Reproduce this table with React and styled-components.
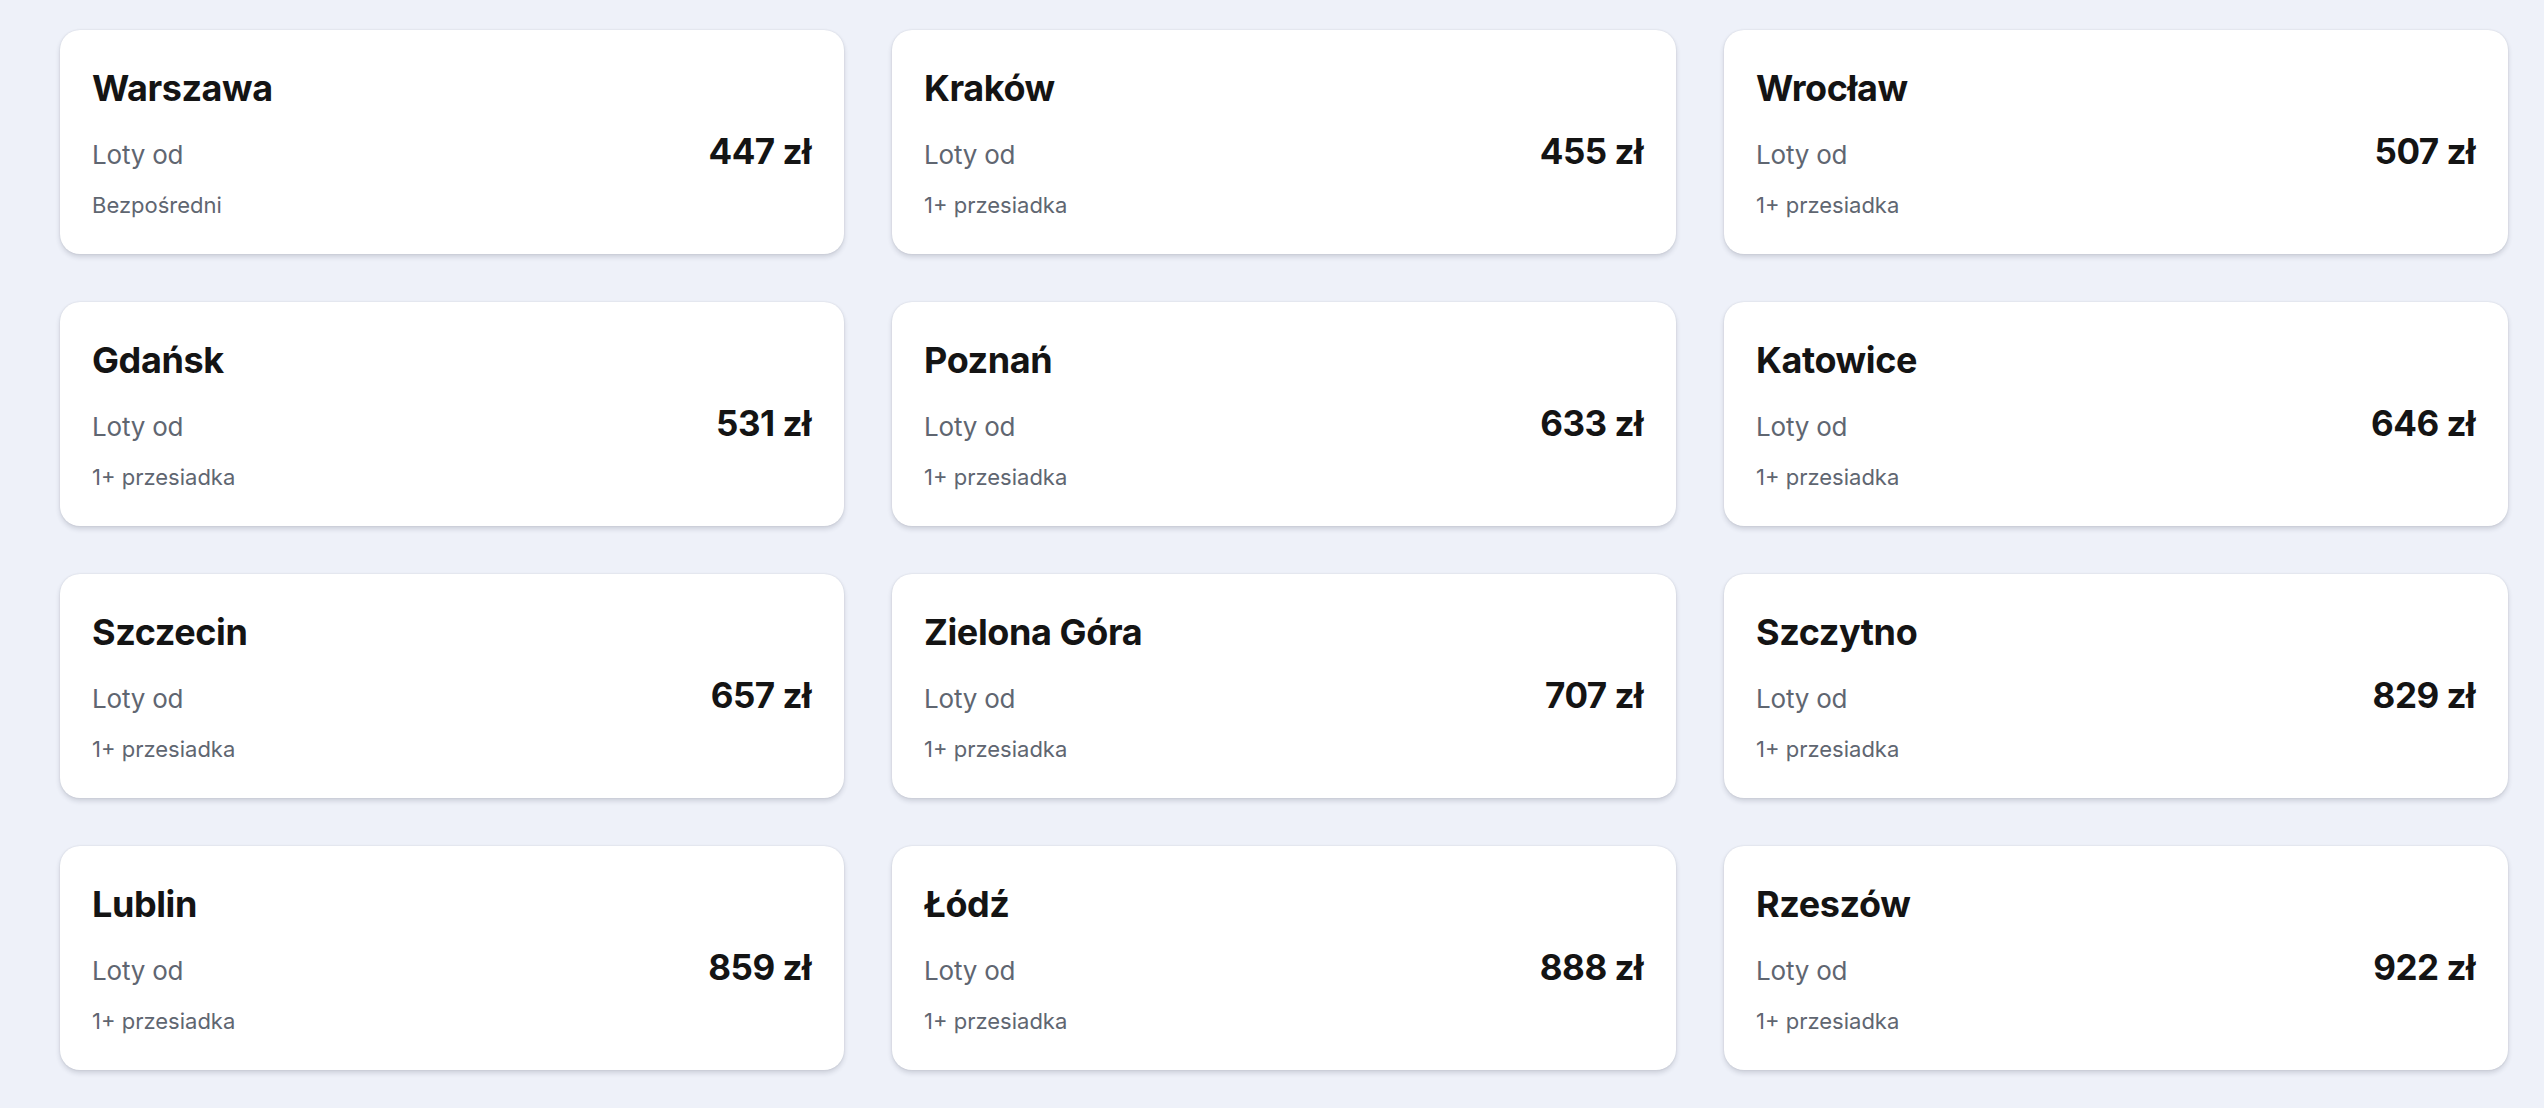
import React from 'react'
import styled, { createGlobalStyle } from 'styled-components'

const GlobalStyle = createGlobalStyle`
    html, body {
        margin: 0;
        padding: 0;
        background: #eef1f9;
        font-family: Inter, "Noto Sans", "Liberation Sans", sans-serif;
    }
`

const Grid = styled.div`
    display: grid;
    grid-template-columns: repeat(3, 1fr);
    gap: 48px;
    padding: 30px 36px 38px 60px;
`

const Card = styled.div`
    display: flex;
    flex-direction: column;
    height: 224px;
    box-sizing: border-box;
    padding: 35px 33px 0 32px;
    background: #fff;
    border-radius: 20px;
    box-shadow: 0 0 2px rgba(30, 40, 60, 0.12), 0 3px 5px rgba(30, 40, 60, 0.16);
`

const Miasto = styled.h3`
    margin: 0;
    font-size: 36px;
    line-height: 46px;
    font-weight: 700;
    color: #141414;
    letter-spacing: -0.4px;
`

const Wiersz = styled.div`
    display: flex;
    justify-content: space-between;
    align-items: baseline;
    margin-top: 17px;
`

const Etykieta = styled.span`
    font-size: 26px;
    line-height: 46px;
    color: #5f6671;
    letter-spacing: -0.2px;
`

const Cena = styled.span`
    font-size: 35px;
    line-height: 46px;
    font-weight: 700;
    color: #141414;
    letter-spacing: -0.5px;
`

const Przesiadki = styled.div`
    margin-top: 13px;
    font-size: 22px;
    line-height: 28px;
    color: #5f6671;
`

const loty = [
    { miasto: 'Warszawa', cena: 447, info: 'Bezpośredni' },
    { miasto: 'Kraków', cena: 455, info: '1+ przesiadka' },
    { miasto: 'Wrocław', cena: 507, info: '1+ przesiadka' },
    { miasto: 'Gdańsk', cena: 531, info: '1+ przesiadka' },
    { miasto: 'Poznań', cena: 633, info: '1+ przesiadka' },
    { miasto: 'Katowice', cena: 646, info: '1+ przesiadka' },
    { miasto: 'Szczecin', cena: 657, info: '1+ przesiadka' },
    { miasto: 'Zielona Góra', cena: 707, info: '1+ przesiadka' },
    { miasto: 'Szczytno', cena: 829, info: '1+ przesiadka' },
    { miasto: 'Lublin', cena: 859, info: '1+ przesiadka' },
    { miasto: 'Łódź', cena: 888, info: '1+ przesiadka' },
    { miasto: 'Rzeszów', cena: 922, info: '1+ przesiadka' },
]

const App = () => (
    <>
        <GlobalStyle />
        <Grid>
            {loty.map(lot => (
                <Card key={lot.miasto}>
                    <Miasto>{lot.miasto}</Miasto>
                    <Wiersz>
                        <Etykieta>Loty od</Etykieta>
                        <Cena>{lot.cena} zł</Cena>
                    </Wiersz>
                    <Przesiadki>{lot.info}</Przesiadki>
                </Card>
            ))}
        </Grid>
    </>
)

export default App
